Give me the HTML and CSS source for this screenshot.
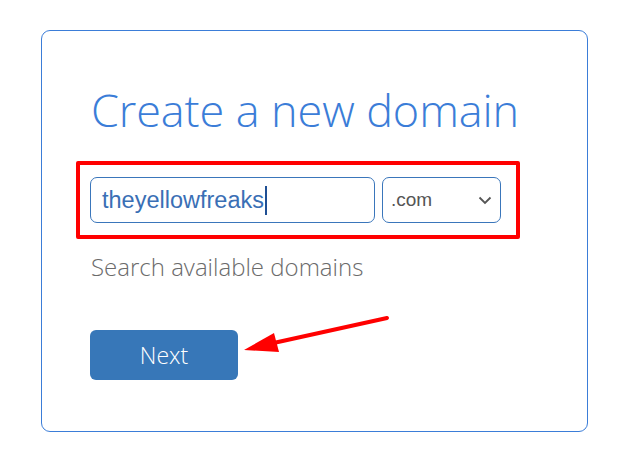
FILE: index.html
```html
<!DOCTYPE html>
<html lang="en">
  <head>
    <meta charset="UTF-8" />
    <title>Create a new domain</title>
    <link rel="stylesheet" href="styles.css">
  </head>
  <body>
    <div class="card">
      <h1 class="card-title">Create a new domain</h1>

      <div class="highlight">
        <div class="domain-row">
          <div class="domain-input">theyellowfreaks<span class="caret"></span></div>
          <div class="domain-select">
            <span>.com</span>
            <svg class="chevron" width="14" height="9" viewBox="0 0 14 9">
              <path d="M1.5 1.5 L7 7 L12.5 1.5" fill="none" stroke="#555" stroke-width="1.8" />
            </svg>
          </div>
        </div>
      </div>

      <p class="hint">Search available domains</p>

      <button class="next-btn">Next</button>

      <!-- annotation arrow -->
      <svg class="arrow" width="160" height="50" viewBox="0 0 160 50">
        <line x1="153" y1="6" x2="35" y2="32" stroke="#f00" stroke-width="4" stroke-linecap="round" />
        <polygon points="10,38 40,21 45,40" fill="#f00" />
      </svg>
    </div>
  </body>
</html>
```

FILE: styles.css
```css
* {
    margin: 0;
    padding: 0;
    box-sizing: border-box;
}

body {
    font-family: 'Open Sans', 'Segoe UI', sans-serif;
    background: #fff;
    padding: 30px 45px 19px 41px;
}

.card {
    position: relative;
    width: 547px;
    height: 402px;
    border: 1px solid #3b7dd8;
    border-radius: 9px;
    padding: 50px 0 0 49px;
}

.card-title {
    font-weight: 300;
    font-size: 45px;
    line-height: 58px;
    color: #3b7dd8;
    letter-spacing: -0.1px;
}

.highlight {
    width: 444px;
    height: 78px;
    margin: 22px 0 0 -15px;
    border: 4px solid #f00;
    border-radius: 2px;
    padding: 12px 0 0 10px;
}

.domain-row {
    display: flex;
    gap: 7px;
}

.domain-input {
    width: 285px;
    height: 46px;
    border: 1px solid #3a76bb;
    border-radius: 7px;
    padding: 0 11px;
    font-family: 'Liberation Sans', Arial, sans-serif;
    font-size: 23.5px;
    line-height: 44px;
    color: #3a6fb5;
    display: flex;
    align-items: center;
}

.caret {
    display: inline-block;
    width: 2px;
    height: 29px;
    background: #1f4f94;
    margin-left: 1px;
}

.domain-select {
    width: 119px;
    height: 46px;
    border: 1px solid #3a76bb;
    border-radius: 7px;
    padding: 0 8px 0 8px;
    font-family: 'Liberation Sans', Arial, sans-serif;
    font-size: 19px;
    color: #555;
    display: flex;
    align-items: center;
    justify-content: space-between;
}

.hint {
    margin-top: 13px;
    font-weight: 300;
    font-size: 24px;
    line-height: 30px;
    color: #6b6b6b;
}

.next-btn {
    margin-top: 48px;
    margin-left: -1px;
    width: 148px;
    height: 50px;
    background: #3777b8;
    border: none;
    border-radius: 6px;
    color: #fff;
    font-family: 'Open Sans', 'Segoe UI', sans-serif;
    font-weight: 300;
    font-size: 23px;
}

.arrow {
    position: absolute;
    left: 192px;
    top: 281px;
}
```
